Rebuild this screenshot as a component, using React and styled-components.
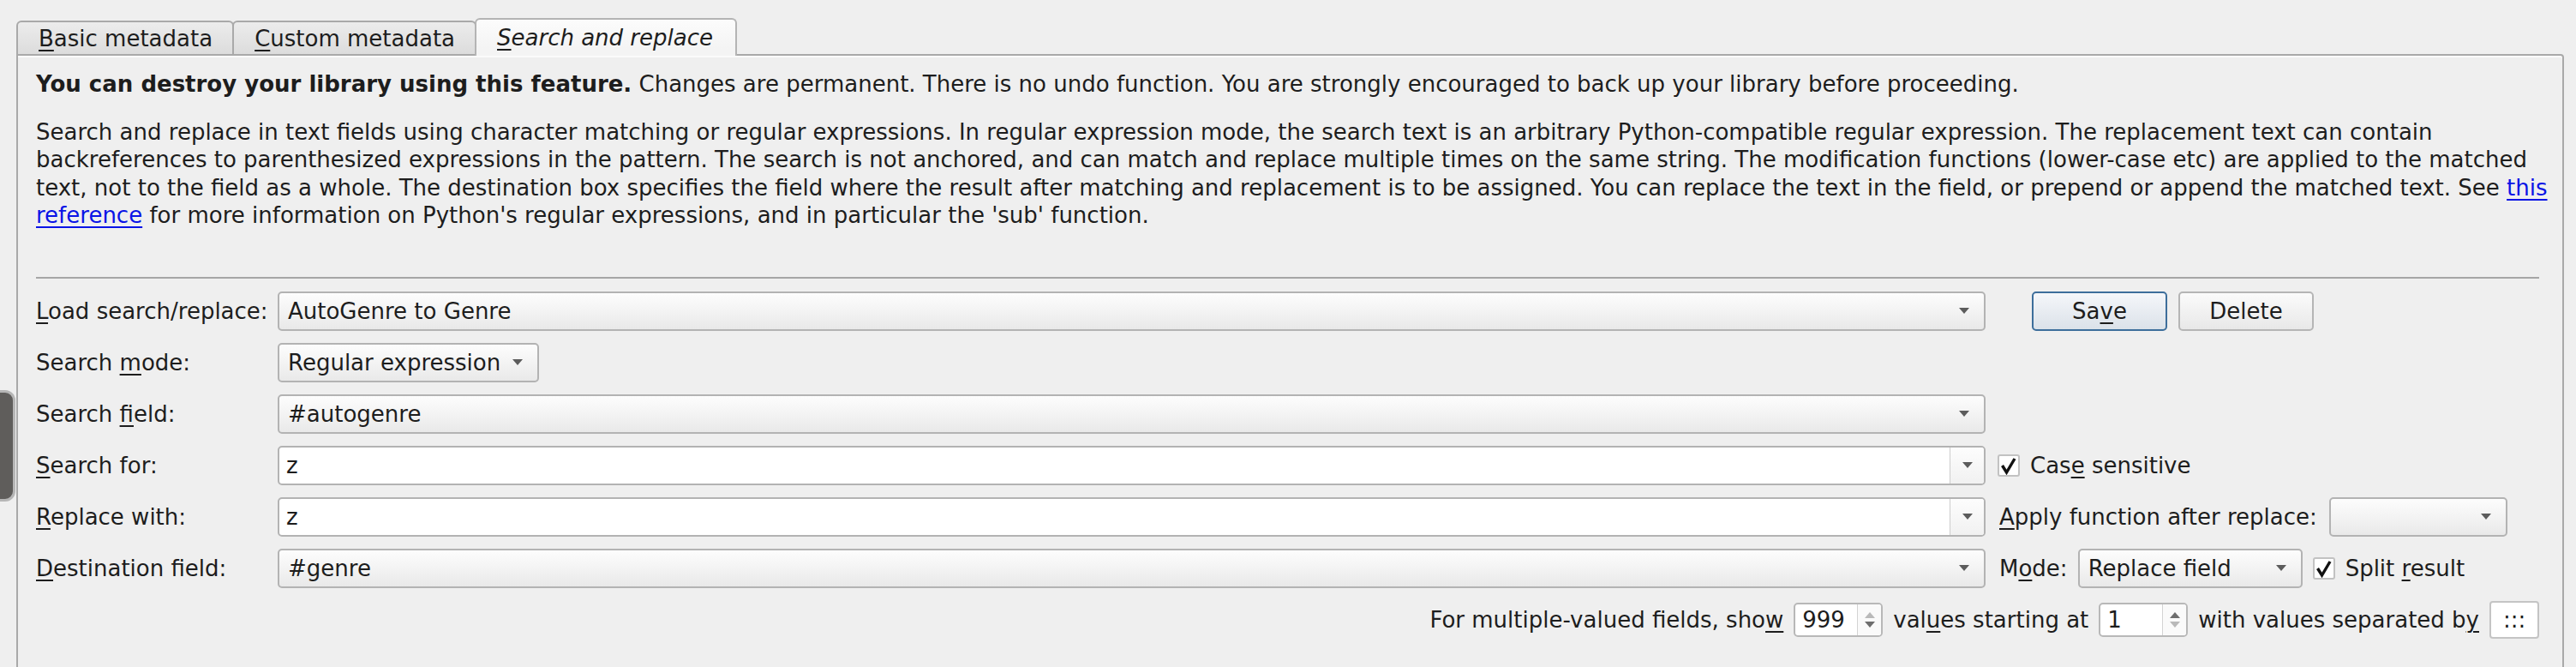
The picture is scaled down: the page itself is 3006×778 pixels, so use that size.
import React from "react";
import styled, { createGlobalStyle, css } from "styled-components";

const GlobalStyle = createGlobalStyle`
  html, body {
    margin: 0;
    padding: 0;
    background: #efefef;
  }
  body {
    font-family: "DejaVu Sans", "Liberation Sans", sans-serif;
    font-size: 26px;
    color: #1d1d1d;
    overflow: hidden;
  }
  u {
    text-decoration-thickness: 2px;
    text-underline-offset: 4px;
  }
`;

const Root = styled.div`
  position: relative;
  padding: 21px 14px 0 19px;
  height: 778px;
  box-sizing: border-box;
`;

const TabBar = styled.div`
  display: flex;
  align-items: flex-end;
  height: 42px;
`;

const Tab = styled.div`
  box-sizing: border-box;
  height: 39px;
  padding: 0 23px 0 24px;
  display: flex;
  align-items: center;
  white-space: nowrap;
  border: 2px solid #a9a9a9;
  border-bottom: none;
  border-radius: 6px 6px 0 0;
  background: linear-gradient(#ececec, #dcdcdc);
  & + & {
    margin-left: -2px;
  }
  ${(p) =>
    p.$active &&
    css`
      height: 44px;
      margin-bottom: -2px;
      padding: 0 26px 0 24px;
      position: relative;
      z-index: 1;
      font-style: italic;
      border-color: #b4b4b4;
      background: linear-gradient(#fcfcfc, #f4f4f4 80%);
    `}
`;

const Pane = styled.div`
  box-sizing: border-box;
  height: 740px;
  border: 2px solid #a9a9a9;
  border-radius: 0 4px 0 0;
  box-shadow: inset 0 2px 0 #fbfbfb;
  padding: 17px 27px 0 21px;
  line-height: 32.6px;
`;

const Para = styled.p`
  margin: 0 -18px 0 0;
  & + & {
    margin-top: 23px;
  }
`;

const Link = styled.a`
  color: #0a14e6;
  text-decoration: underline;
  text-decoration-thickness: 2px;
  text-underline-offset: 4px;
`;

const Rule = styled.hr`
  margin: 55px 0 15px;
  border: none;
  border-top: 2px solid #a6a6a6;
`;

const Form = styled.div`
  display: grid;
  grid-template-columns: 282px 1993px 1fr;
  grid-auto-rows: 46px;
  row-gap: 14px;
  align-items: center;
  line-height: normal;
`;

const Label = styled.label`
  white-space: nowrap;
`;

const Side = styled.div`
  display: flex;
  align-items: center;
  gap: ${(p) => p.$gap ?? 14}px;
  padding-left: ${(p) => p.$pad ?? 14}px;
  white-space: nowrap;
`;

const Combo = styled.div`
  box-sizing: border-box;
  height: 46px;
  width: ${(p) => (p.$w ? `${p.$w}px` : "100%")};
  display: flex;
  align-items: center;
  justify-content: space-between;
  padding: 0 17px 0 10px;
  border: 2px solid #b3b3b3;
  border-radius: 5px;
  background: linear-gradient(#fdfdfd, #e9e9e9);
  white-space: nowrap;
`;

const EditCombo = styled.div`
  box-sizing: border-box;
  height: 46px;
  width: 100%;
  display: flex;
  align-items: stretch;
  border: 2px solid #b3b3b3;
  border-radius: 5px;
  background: #fff;
  overflow: hidden;
`;

const EditText = styled.div`
  flex: 1;
  display: flex;
  align-items: center;
  padding-left: 8px;
`;

const ArrowBox = styled.div`
  width: 39px;
  display: flex;
  align-items: center;
  justify-content: center;
  border-left: 1px solid #cdcdcd;
  background: linear-gradient(#fdfdfd, #f1f1f1);
`;

const Caret = styled.span`
  width: 0;
  height: 0;
  border-left: 6px solid transparent;
  border-right: 6px solid transparent;
  border-top: 7px solid #5c5c5c;
`;

const Button = styled.button`
  box-sizing: border-box;
  height: 46px;
  width: 158px;
  font: inherit;
  color: inherit;
  border-radius: 5px;
  border: 2px solid ${(p) => (p.$default ? "#3d6e9b" : "#b5b5b5")};
  background: ${(p) =>
    p.$default
      ? "linear-gradient(#f5f7fa, #dbe2e9)"
      : "linear-gradient(#fbfbfb, #e8e8e8)"};
  padding: 0;
`;

const Check = styled.span`
  box-sizing: border-box;
  width: 26px;
  height: 26px;
  display: inline-flex;
  align-items: center;
  justify-content: center;
  border: 2px solid #c2c2c2;
  border-radius: 3px;
  background: #fff;
`;

const BottomRow = styled.div`
  grid-column: 1 / -1;
  height: 44px;
  display: flex;
  align-items: center;
  justify-content: flex-end;
  gap: 12px;
  white-space: nowrap;
`;

const Spin = styled.div`
  box-sizing: border-box;
  width: ${(p) => p.$w}px;
  height: 40px;
  display: flex;
  border: 2px solid #b8b8b8;
  border-radius: 5px;
  background: #fff;
  overflow: hidden;
`;

const SpinText = styled.div`
  flex: 1;
  display: flex;
  align-items: center;
  padding-left: 8px;
`;

const SpinArrows = styled.div`
  width: 27px;
  display: flex;
  flex-direction: column;
  align-items: center;
  justify-content: center;
  gap: 4px;
  border-left: 1px solid #d3d3d3;
  background: #fafafa;
`;

const Tri = styled.span`
  width: 0;
  height: 0;
  border-left: 6px solid transparent;
  border-right: 6px solid transparent;
  ${(p) =>
    p.$up
      ? css`border-bottom: 7px solid ${p.$dim ? "#b9b9b9" : "#6e6e6e"};`
      : css`border-top: 7px solid ${p.$dim ? "#b9b9b9" : "#6e6e6e"};`}
`;

const SepBox = styled.div`
  box-sizing: border-box;
  width: 58px;
  height: 44px;
  display: flex;
  align-items: center;
  padding-left: 14px;
  border: 2px solid #c4c4c4;
  border-radius: 4px;
  background: #fff;
`;

const Handle = styled.div`
  position: absolute;
  left: -12px;
  top: 455px;
  width: 30px;
  height: 130px;
  box-sizing: border-box;
  border: 3px solid #b6b6b6;
  border-radius: 12px;
  background: #5f5d5b;
  display: flex;
  align-items: center;
  justify-content: flex-end;
  padding-right: 17px;
`;

const HandleArrow = styled.span`
  width: 0;
  height: 0;
  border-top: 5px solid transparent;
  border-bottom: 5px solid transparent;
  border-left: 5px solid #fff;
`;

const CheckMark = () => (
  <Check>
    <svg width="22" height="22" viewBox="0 0 22 22">
      <path d="M3.5 11 L8.5 19 L18 3" fill="none" stroke="#111" strokeWidth="3.4" strokeLinejoin="miter" />
    </svg>
  </Check>
);

const Dropdown = ({ w, children }) => (
  <Combo $w={w}>
    <span>{children}</span>
    <Caret />
  </Combo>
);

const EditableDropdown = ({ children }) => (
  <EditCombo>
    <EditText>{children}</EditText>
    <ArrowBox>
      <Caret />
    </ArrowBox>
  </EditCombo>
);

const SpinBox = ({ w, value, upDim, downDim }) => (
  <Spin $w={w}>
    <SpinText>{value}</SpinText>
    <SpinArrows>
      <Tri $up $dim={upDim} />
      <Tri $dim={downDim} />
    </SpinArrows>
  </Spin>
);

export default function App() {
  return (
    <>
      <GlobalStyle />
      <Root>
        <TabBar>
          <Tab>
            <span><u>B</u>asic metadata</span>
          </Tab>
          <Tab>
            <span><u>C</u>ustom metadata</span>
          </Tab>
          <Tab $active>
            <span><u>S</u>earch and replace</span>
          </Tab>
        </TabBar>
        <Pane>
          <Para>
            <b>You can destroy your library using this feature.</b> Changes are permanent. There is no undo
            function. You are strongly encouraged to back up your library before proceeding.
          </Para>
          <Para>
            Search and replace in text fields using character matching or regular expressions. In regular
            expression mode, the search text is an arbitrary Python-compatible regular expression. The
            replacement text can contain backreferences to parenthesized expressions in the pattern. The search
            is not anchored, and can match and replace multiple times on the same string. The modification
            functions (lower-case etc) are applied to the matched text, not to the field as a whole. The
            destination box specifies the field where the result after matching and replacement is to be
            assigned. You can replace the text in the field, or prepend or append the matched text. See{" "}
            <Link href="#">this reference</Link> for more information on Python's regular expressions, and in
            particular the 'sub' function.
          </Para>
          <Rule />
          <Form>
            <Label><u>L</u>oad search/replace:</Label>
            <Dropdown>AutoGenre to Genre</Dropdown>
            <Side $pad={54} $gap={13}>
              <Button $default>Sa<u>v</u>e</Button>
              <Button>Delete</Button>
            </Side>

            <Label>Search <u>m</u>ode:</Label>
            <div>
              <Dropdown w={305}>Regular expression</Dropdown>
            </div>
            <div />

            <Label>Search <u>f</u>ield:</Label>
            <Dropdown>#autogenre</Dropdown>
            <div />

            <Label><u>S</u>earch for:</Label>
            <EditableDropdown>z</EditableDropdown>
            <Side $gap={12}>
              <CheckMark />
              <span>Cas<u>e</u> sensitive</span>
            </Side>

            <Label><u>R</u>eplace with:</Label>
            <EditableDropdown>z</EditableDropdown>
            <Side $pad={16} $gap={14}>
              <span><u>A</u>pply function after replace:</span>
              <Dropdown w={208} />
            </Side>

            <Label><u>D</u>estination field:</Label>
            <Dropdown>#genre</Dropdown>
            <Side $pad={16} $gap={12}>
              <span>M<u>o</u>de:</span>
              <Dropdown w={262}>Replace field</Dropdown>
              <CheckMark />
              <span>Split <u>r</u>esult</span>
            </Side>

            <BottomRow>
              <span>For multiple-valued fields, sho<u>w</u></span>
              <SpinBox w={104} value="999" upDim />
              <span>val<u>u</u>es starting at</span>
              <SpinBox w={104} value="1" downDim />
              <span>with values separated b<u>y</u></span>
              <SepBox>:::</SepBox>
            </BottomRow>
          </Form>
        </Pane>
        <Handle>
          <HandleArrow />
        </Handle>
      </Root>
    </>
  );
}
